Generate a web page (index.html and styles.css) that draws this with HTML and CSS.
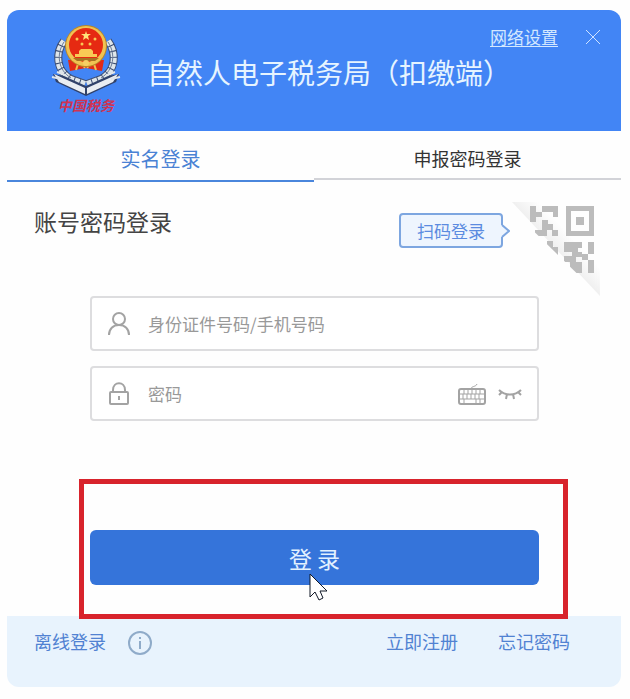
FILE: index.html
```
<!DOCTYPE html>
<html lang="zh-CN">
<head>
  <meta charset="UTF-8">
  <meta name="viewport" content="width=device-width, initial-scale=1.0">
  <title>自然人电子税务局（扣缴端）</title>
  <link rel="stylesheet" href="styles.css">
</head>
<body>
  <main class="window">
    <header class="header">
      <div class="logo">
        <svg class="emblem" viewBox="0 0 70 72" aria-hidden="true">
          <!-- wheat ears -->
          <g fill="none" stroke="#3c4d73" stroke-width="8">
            <path d="M13 17C4 29 5 47 20 55L34 60"/>
            <path d="M57 17C66 29 65 47 50 55L36 60"/>
          </g>
          <g fill="none" stroke="#dfe6ea" stroke-width="6" stroke-dasharray="5 1">
            <path d="M13 17C4 29 5 47 20 55L34 60"/>
            <path d="M57 17C66 29 65 47 50 55L36 60"/>
          </g>
          <g fill="none" stroke="#6c7b96" stroke-width="1">
            <path d="M13 18C5 30 7 46 20 54M57 18C65 30 63 46 50 54"/>
          </g>
          <!-- open book -->
          <path d="M2 50L13 52L35 62L57 52L68 50L65 58L35 72L5 58Z" fill="#31426a"/>
          <path d="M3 50L14 55L34 64V70L8 58Z" fill="#e9edf2"/>
          <path d="M67 50L56 55L36 64V70L62 58Z" fill="#e9edf2"/>
          <path d="M1 53L10 55M69 53L60 55M6 48L14 51M64 48L56 51" stroke="#dfe5ea" stroke-width="2"/>
          <!-- national emblem -->
          <path d="M17 36L19 47L35 44L51 47L53 36Z" fill="#e22a16"/>
          <path d="M25 46L27 40M45 46L43 40M33 44L35 40L37 44" stroke="#f1c04d" stroke-width="2" fill="none"/>
          <circle cx="35" cy="22" r="21" fill="#b98727"/>
          <circle cx="35" cy="22" r="20" fill="#f0c352"/>
          <circle cx="35" cy="21" r="17" fill="#e62a12"/>
          <path d="M35 7L36 10H40L37 12L38 16L35 14L32 16L33 12L30 10H34Z" fill="#ffe47b"/>
          <g fill="#f9c955">
            <circle cx="26" cy="15" r="1.5"/>
            <circle cx="44" cy="15" r="1.5"/>
            <circle cx="31" cy="20" r="1.5"/>
            <circle cx="39" cy="20" r="1.5"/>
            <path d="M28 27L30 25H40L42 27V30H46V33H24V30H28Z"/>
          </g>
          <path d="M22 34H48L44 37H26Z" fill="#a77321"/>
          <circle cx="35" cy="39" r="3" fill="#f5cf64"/>
        </svg>
        <span class="logo-text">中国税务</span>
      </div>
      <h1 class="title">自然人电子税务局（扣缴端）</h1>
      <div class="header-tools">
        <a href="#" class="network">网络设置</a>
        <button type="button" class="close" aria-label="关闭">
          <svg viewBox="0 0 14 14"><path d="M0 0L14 14M14 0L0 14"/></svg>
        </button>
      </div>
    </header>

    <nav class="tabs">
      <button type="button" class="tab active">实名登录</button>
      <button type="button" class="tab">申报密码登录</button>
    </nav>

    <div class="subhead">
      <h2>账号密码登录</h2>
      <button type="button" class="scan">扫码登录
        <svg class="scan-arrow" viewBox="0 0 9 14" aria-hidden="true">
          <path d="M0 1H1L8 7L1 13H0Z" fill="#eef5fe"/>
          <path d="M1 1L8 7L1 13" fill="none" stroke="#7da6e0" stroke-width="2"/>
        </svg>
      </button>
      <svg class="qr" viewBox="0 0 88 94" aria-hidden="true">
        <defs>
          <linearGradient id="fold" x1="0" y1="1" x2="1" y2="0">
            <stop offset="0.45" stop-color="#ebebeb"/>
            <stop offset="0.65" stop-color="#fefefe"/>
          </linearGradient>
          <clipPath id="corner"><path d="M0 8V0H88V94Z"/></clipPath>
        </defs>
        <path d="M0 0H88V94Z" fill="url(#fold)"/>
        <g clip-path="url(#corner)" fill="#bcbcbc">
          <path d="M54 4H82V34H54ZM59 9V29H77V9Z" fill-rule="evenodd"/>
          <path d="M64 15H72V23H64Z"/>
          <path d="M18 4H24V10H30V15H24V20H18ZM30 4H46V15H41V10H30ZM30 18H36V22H41V28H46V34H40V28H35V34H23V28H30Z"/>
          <path d="M35 39H41V45H46V56H41V50H35Z"/>
          <path d="M52 40H70V46H66V50H70V55H64V60H70V71H58V60H52V54H60V50H52ZM76 40H82V52H76ZM70 52H76V58H70ZM76 58H82V71H76Z"/>
        </g>
      </svg>
    </div>

    <form class="form">
      <div class="field">
        <label for="account" aria-label="账号">
          <svg class="field-icon" viewBox="0 0 24 24"><circle cx="12" cy="7" r="6"/><path d="M2 23C2 17 6 13 12 13S22 17 22 23"/></svg>
        </label>
        <input type="text" id="account" placeholder="身份证件号码/手机号码">
      </div>
      <div class="field">
        <label for="password" aria-label="密码">
          <svg class="field-icon" viewBox="0 0 24 24"><rect x="3" y="10" width="18" height="12" rx="1"/><path d="M6 10V8C6 -1 18 -1 18 8V10M12 14V18"/></svg>
        </label>
        <input type="password" id="password" placeholder="密码">
        <button type="button" class="field-button" aria-label="软键盘">
          <svg class="keyboard" viewBox="0 0 28 22">
            <rect x="1" y="6" width="26" height="15" rx="2" stroke-width="2"/>
            <path d="M13 6C13 3 18 4 19 1M2 11H26M2 16H26M6 6V11M10 6V11M14 6V11M18 6V11M22 6V11M5 11V16M9 11V16M13 11V16M17 11V16M21 11V16M6 16V20M18 16V20M22 16V20"/>
          </svg>
        </button>
        <button type="button" class="field-button" aria-label="显示密码">
          <svg class="eye" viewBox="0 0 24 12"><path d="M1 2C7 8 17 8 23 2M4 4L1 7M9 6L8 11M15 6L16 11M20 4L23 7"/></svg>
        </button>
      </div>
      <div class="submit-row">
        <button type="submit" class="submit">登 录</button>
        <svg class="cursor" viewBox="0 0 19 28" aria-hidden="true"><path d="M1 1V24L6 19L10 27L14 25L11 18H18Z" fill="#fff" stroke="#111827"/></svg>
      </div>
    </form>

    <footer class="footer">
      <a href="#">离线登录</a>
      <button type="button" class="info" aria-label="说明">
        <svg viewBox="0 0 24 24"><circle cx="12" cy="12" r="11"/><path d="M12 10V18M12 6V8"/></svg>
      </button>
      <a href="#" class="register">立即注册</a>
      <a href="#">忘记密码</a>
    </footer>
  </main>
</body>
</html>
```
FILE: styles.css
```
* {
  box-sizing: border-box;
}
body {
  margin: 0;
  padding: 10px 9px 12px 7px;
  background: #fefefe;
  font-family: "Noto Sans CJK SC", sans-serif;
}
button {
  margin: 0;
  padding: 0;
  border: 0;
  background: none;
  font-family: inherit;
  cursor: pointer;
}
a {
  color: #5182d2;
  text-decoration: none;
}
svg {
  display: block;
}
.window {
  border-radius: 12px;
  overflow: hidden;
}

/* header */
.header {
  position: relative;
  display: flex;
  align-items: flex-start;
  height: 121px;
  padding: 14px 20px 0 44px;
  background: #4285f5;
}
.logo {
  width: 70px;
  text-align: center;
}
.emblem {
  width: 70px;
  height: 72px;
}
.logo-text {
  display: block;
  color: #cf3352;
  font-size: 14px;
  font-style: italic;
  font-weight: bold;
  line-height: 18px;
}
.title {
  margin: 28px 0 0 26px;
  color: #e6f4ff;
  font-size: 28px;
  font-weight: normal;
  line-height: 40px;
  white-space: nowrap;
}
.header-tools {
  position: absolute;
  top: 15px;
  right: 21px;
  display: flex;
  align-items: center;
  gap: 28px;
}
.network {
  color: #d3e8ff;
  font-size: 17px;
  line-height: 24px;
  text-decoration: underline;
  text-underline-offset: 2px;
}
.close svg {
  width: 14px;
  height: 14px;
  fill: none;
  stroke: #cfe3ff;
  stroke-width: 1;
}

/* tabs */
.tabs {
  display: flex;
  height: 50px;
}
.tab {
  flex: 1;
  height: 49px;
  padding-top: 6px;
  border-bottom: 2px solid #d2d3d8;
  color: #333;
  font-size: 18px;
}
.tab.active {
  height: 51px;
  border-bottom: 2px solid #4a86dc;
  color: #4a82d4;
  font-size: 20px;
}

/* account heading, scan login */
.subhead {
  display: flex;
  align-items: flex-start;
  padding: 21px 21px 0 27px;
}
.subhead h2 {
  margin: 2px auto 0 0;
  color: #444;
  font-size: 23px;
  font-weight: normal;
  line-height: 34px;
}
.scan {
  position: relative;
  width: 104px;
  height: 35px;
  margin: 11px 9px 0 0;
  border: 2px solid #7da6e0;
  border-radius: 4px;
  background: #eef5fe;
  color: #5b8be0;
  font-size: 17px;
  line-height: 30px;
}
.scan-arrow {
  position: absolute;
  top: 9px;
  right: -9px;
  width: 9px;
  height: 14px;
}
.qr {
  width: 88px;
  height: 94px;
}

/* form */
.form {
  padding: 0 82px 31px 83px;
}
.field {
  display: flex;
  align-items: center;
  height: 55px;
  margin-bottom: 15px;
  padding: 0 15px 0 15px;
  border: 2px solid #dddddf;
  border-radius: 4px;
  background: #fff;
}
.field input {
  flex: 1;
  min-width: 0;
  height: 40px;
  padding: 0 0 0 17px;
  border: 0;
  outline: 0;
  background: none;
  color: #333;
  font-family: inherit;
  font-size: 17px;
}
.field input::placeholder {
  color: #999;
  opacity: 1;
}
.field svg {
  fill: none;
  stroke: #a3a3a3;
  stroke-width: 2;
}
.field-icon {
  width: 24px;
  height: 24px;
}
.field-button {
  margin-left: 12px;
}
.field .keyboard {
  width: 28px;
  height: 22px;
  stroke-width: 1;
}
.eye {
  width: 24px;
  height: 12px;
}
.submit-row {
  position: relative;
  margin-top: 109px;
}
/* red frame around the login button */
.submit-row::after {
  content: "";
  position: absolute;
  inset: -51px -29px -34px -11px;
  border: 5px solid #d8232c;
  pointer-events: none;
}
.submit {
  display: block;
  width: 100%;
  height: 55px;
  border-radius: 6px;
  background: #3574da;
  color: #e2f1ff;
  font-size: 23px;
}
.cursor {
  position: absolute;
  top: 43px;
  left: calc(50% - 6px);
  width: 19px;
  height: 28px;
}

/* footer */
.footer {
  display: flex;
  align-items: flex-start;
  height: 71px;
  padding: 12px 51px 0 27px;
  background: #e8f3fd;
  font-size: 18px;
  line-height: 26px;
}
.info {
  margin: 3px auto 0 22px;
}
.info svg {
  width: 24px;
  height: 24px;
  fill: none;
  stroke: #8fabc9;
  stroke-width: 2;
}
.register {
  margin-right: 40px;
}
```
